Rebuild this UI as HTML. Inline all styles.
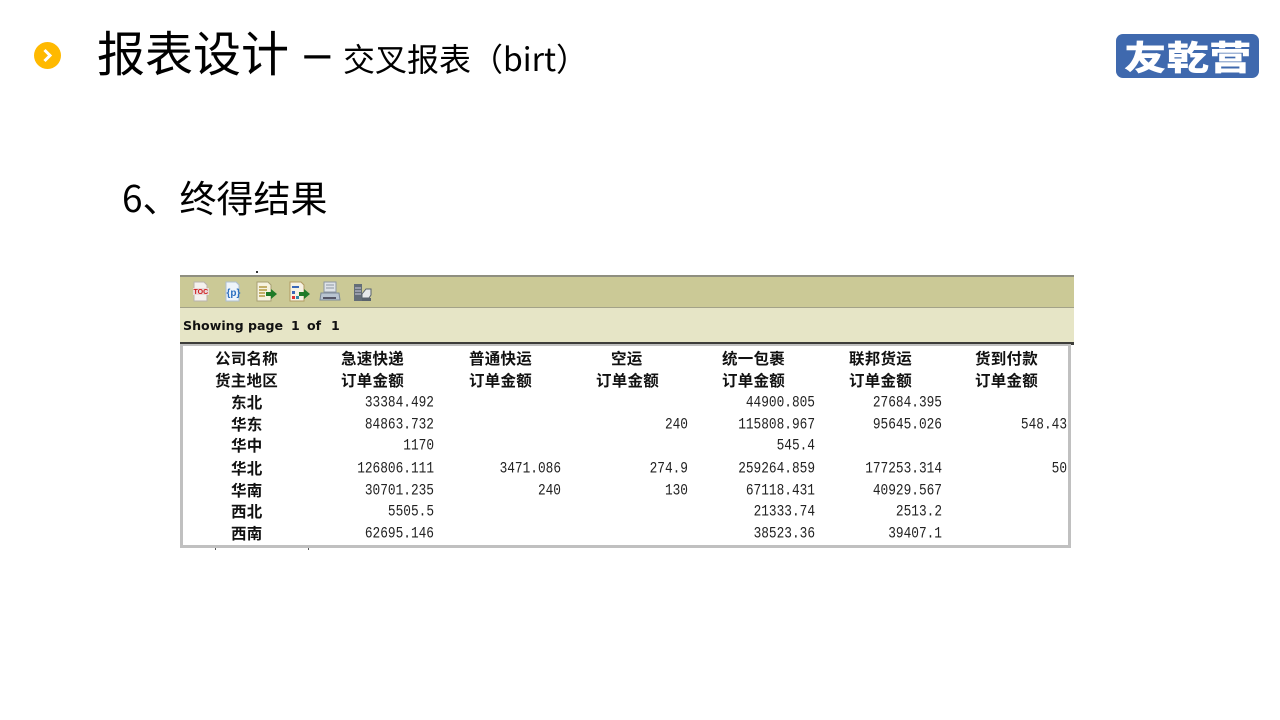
<!DOCTYPE html>
<html lang="zh"><head><meta charset="utf-8"><title>报表设计</title>
<style>
html,body{margin:0;padding:0;background:#fff}
#p{position:relative;width:1280px;height:720px;overflow:hidden;background:#fff;font-family:"Noto Sans CJK SC",sans-serif;color:#000}
.a{position:absolute;white-space:nowrap}
#t{position:absolute;left:0;top:0;width:1280px;height:720px;filter:blur(.35px)}
.h{position:absolute;white-space:nowrap;font:700 15.5px/20px "Noto Sans CJK SC",sans-serif;letter-spacing:.25px;color:#111}
.n{position:absolute;white-space:nowrap;text-align:right;font:12.8px/20px "Liberation Mono",monospace;color:#222;width:100px;transform-origin:right center;transform:translateY(1px) scaleY(1.22)}
.s{position:absolute;white-space:nowrap;top:317px;font:700 12.6px/18px "DejaVu Sans",sans-serif;color:#111}
</style></head><body><div id="p">
<svg class="a" style="left:33px;top:41px" width="30" height="30" viewBox="0 0 30 30"><circle cx="14.5" cy="14.5" r="13.5" fill="#ffb900"/><path d="M11.5 9l5.500 5.500-5.500 5.500" fill="none" stroke="#fff" stroke-width="3"/></svg>
<div class="a" style="left:97px;top:17px;font-size:48px;line-height:66px">报表设计</div>
<div class="a" style="left:304px;top:19px;font:48px/70px 'Liberation Sans',sans-serif;transform:scaleX(.98)">–</div>
<div class="a" style="left:343px;top:36px;font-size:32px;line-height:44px">交叉报表（birt）</div>
<div class="a" style="left:1116px;top:34px;width:143px;height:44px;background:#3f69ae;border-radius:7px"></div>
<div class="a" style="left:1124px;top:36px;height:40px;color:#fff;font:900 34px/40px 'Noto Sans CJK SC',sans-serif;transform-origin:left center;transform:scaleX(1.25)">友乾营</div>
<div class="a" style="left:122px;top:170px;font-size:37px;line-height:52px">6、终得结果</div>
<div id="t">
<div class="a" style="left:180px;top:275px;width:894px;height:30px;background:#cbc996;border-top:2px solid #8f8f80"></div>
<div class="a" style="left:180px;top:307px;width:894px;height:1.500px;background:#a3a288"></div>
<div class="a" style="left:180px;top:308px;width:894px;height:34px;background:#e6e5c6"></div>
<div class="a" style="left:180px;top:342px;width:894px;height:2.500px;background:#3d3d3a"></div>
<div class="s" style="left:183px">Showing page</div><div class="s" style="left:291px">1</div><div class="s" style="left:307px">of</div><div class="s" style="left:331px">1</div>
<div class="a" style="left:180px;top:344px;width:885px;height:199px;border:3px solid #c0c0c0;border-top-width:2px;background:#fff"></div>
<div class="a" style="left:256px;top:271px;width:2px;height:2px;background:#333"></div>
<div class="a" style="left:215px;top:548px;width:1px;height:2px;background:#555"></div>
<div class="a" style="left:308px;top:548px;width:1px;height:2px;background:#555"></div>
<svg class="a" style="left:190px;top:280px" width="190" height="24" viewBox="0 0 190 24">
<path d="M4 2h10l3 3v16H4z" fill="#f4f1ee" stroke="#b9b3ac"/><rect x="3" y="8" width="16" height="7" fill="#e8d9d9"/><text x="3.500" y="14" font-family="Liberation Sans" font-weight="700" font-size="7" fill="#d01c1c">TOC</text>
<path d="M36 2h10l3 3v16H36z" fill="#eef4fb" stroke="#aebfd2"/><text x="36.500" y="16" font-family="Liberation Sans" font-weight="700" font-size="10" fill="#2b6fc0">{p}</text>
<path d="M67 2h11l3 3v16H67z" fill="#f6f2df" stroke="#a79f73"/><path d="M69 7h8M69 10h8M69 13h6M69 16h6" stroke="#b39a45" stroke-width="1.500"/><path d="M76 12h5V9l6 5-6 5v-3h-5z" fill="#1f7a28"/>
<path d="M100 2h11l3 3v16h-14z" fill="#f6f2e4" stroke="#b19b62"/><path d="M102 7h7" stroke="#3a67b8" stroke-width="2"/><rect x="102" y="11" width="3" height="3" fill="#3a67b8"/><rect x="102" y="16" width="3" height="3" fill="#d33"/><rect x="106" y="16" width="3" height="3" fill="#38a"/><path d="M109 12h5V9l6 5-6 5v-3h-5z" fill="#1f7a28"/>
<path d="M134 2h12v10h-12z" fill="#dfe3e8" stroke="#8e97a2"/><path d="M136 5h8M136 8h8" stroke="#8e97a2"/><path d="M131 13h18l1 7h-20z" fill="#b9c4d1" stroke="#7d8a99"/><rect x="133" y="17" width="13" height="2" fill="#556"/>
<rect x="164" y="4" width="8" height="17" fill="#646d77"/><path d="M165 8h6M165 11h6M165 14h6" stroke="#ccd"/><path d="M172 14l4-5h5v6l-2 3h-7z" fill="#e6e8ea" stroke="#59626c"/><rect x="172" y="18" width="9" height="3" fill="#59626c"/>
</svg>
<div class="h" style="left:215px;top:348px">公司名称</div><div class="h" style="left:215px;top:370px">货主地区</div>
<div class="h" style="left:341px;top:348px">急速快递</div><div class="h" style="left:341px;top:370px">订单金额</div>
<div class="h" style="left:469px;top:348px">普通快运</div><div class="h" style="left:469px;top:370px">订单金额</div>
<div class="h" style="left:611px;top:348px">空运</div><div class="h" style="left:596px;top:370px">订单金额</div>
<div class="h" style="left:722px;top:348px">统一包裹</div><div class="h" style="left:722px;top:370px">订单金额</div>
<div class="h" style="left:849px;top:348px">联邦货运</div><div class="h" style="left:849px;top:370px">订单金额</div>
<div class="h" style="left:975px;top:348px">货到付款</div><div class="h" style="left:975px;top:370px">订单金额</div>
<div class="h" style="left:231px;top:392px">东北</div><div class="h" style="left:231px;top:414px">华东</div><div class="h" style="left:231px;top:435px">华中</div><div class="h" style="left:231px;top:458px">华北</div><div class="h" style="left:231px;top:480px">华南</div><div class="h" style="left:231px;top:501px">西北</div><div class="h" style="left:231px;top:523px">西南</div>
<div class="n" style="left:334px;top:392px">33384.492</div><div class="n" style="left:715px;top:392px">44900.805</div><div class="n" style="left:842px;top:392px">27684.395</div>
<div class="n" style="left:334px;top:414px">84863.732</div><div class="n" style="left:588px;top:414px">240</div><div class="n" style="left:715px;top:414px">115808.967</div><div class="n" style="left:842px;top:414px">95645.026</div><div class="n" style="left:967px;top:414px">548.43</div>
<div class="n" style="left:334px;top:435px">1170</div><div class="n" style="left:715px;top:435px">545.4</div>
<div class="n" style="left:334px;top:458px">126806.111</div><div class="n" style="left:461px;top:458px">3471.086</div><div class="n" style="left:588px;top:458px">274.9</div><div class="n" style="left:715px;top:458px">259264.859</div><div class="n" style="left:842px;top:458px">177253.314</div><div class="n" style="left:967px;top:458px">50</div>
<div class="n" style="left:334px;top:480px">30701.235</div><div class="n" style="left:461px;top:480px">240</div><div class="n" style="left:588px;top:480px">130</div><div class="n" style="left:715px;top:480px">67118.431</div><div class="n" style="left:842px;top:480px">40929.567</div>
<div class="n" style="left:334px;top:501px">5505.5</div><div class="n" style="left:715px;top:501px">21333.74</div><div class="n" style="left:842px;top:501px">2513.2</div>
<div class="n" style="left:334px;top:523px">62695.146</div><div class="n" style="left:715px;top:523px">38523.36</div><div class="n" style="left:842px;top:523px">39407.1</div>
</div>
</div></body></html>
